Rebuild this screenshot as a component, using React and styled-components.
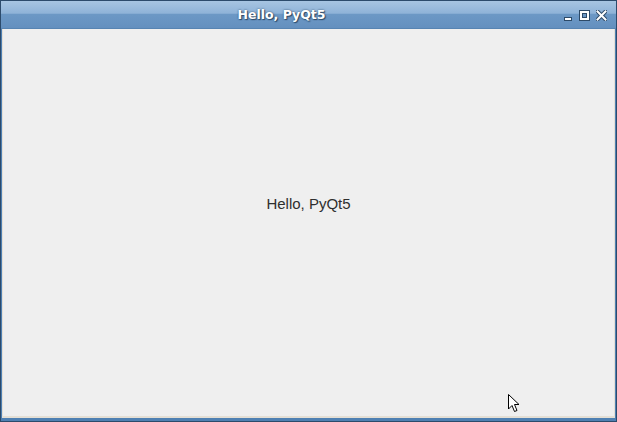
import React from 'react'
import styled, { createGlobalStyle } from 'styled-components'

const GlobalStyle = createGlobalStyle`
    html, body {
        margin: 0;
        padding: 0;
        background: #efefef;
    }
    #root {
        width: 617px;
        height: 422px;
    }
`

const Window = styled.div`
    position: relative;
    box-sizing: border-box;
    width: 617px;
    height: 422px;
    display: flex;
    flex-direction: column;
    background: #4f80b2;
    border: 1px solid #2c4b6c;
    overflow: hidden;
`

const TitleBar = styled.div`
    position: relative;
    height: 27px;
    flex: none;
    display: flex;
    align-items: center;
    justify-content: center;
    background: linear-gradient(
        to bottom,
        #a7c5e2 0%,
        #8fb3d8 45%,
        #6c98c5 50%,
        #6490bf 100%
    );
    border-bottom: 1px solid #5784b2;
`

const Title = styled.span`
    font-family: "DejaVu Sans", sans-serif;
    font-weight: bold;
    font-size: 12.5px;
    color: #ffffff;
    text-shadow: 0 0 2px #2d4a68, 1px 1px 1px #2d4a68;
    margin-right: 54px;
`

const Controls = styled.div`
    position: absolute;
    right: 9px;
    top: 9px;
    display: flex;
    align-items: center;
    gap: 6px;
`

const ControlIcon = styled.svg`
    width: ${p => p.$w || 11}px;
    height: 11px;
    display: block;
`

const Content = styled.div`
    flex: 1;
    display: flex;
    align-items: center;
    justify-content: center;
    padding-bottom: 38px;
    margin: 0 1px 3px 1px;
    background: #efefef;
    border: 1px solid #e4dfd5;
    border-top: none;
    border-bottom-width: 2px;
`

const Label = styled.span`
    font-family: "Liberation Sans", Arial, sans-serif;
    font-size: 15px;
    color: #2e2e2e;
`

const Cursor = styled.svg`
    position: absolute;
    left: 506px;
    top: 392px;
    width: 14px;
    height: 21px;
`

export default function App() {
    return (
        <>
            <GlobalStyle />
            <Window>
                <TitleBar>
                    <Title>Hello, PyQt5</Title>
                    <Controls>
                        <ControlIcon $w={9} viewBox="0 0 9 11">
                            <rect x="0.5" y="7.5" width="7" height="3" fill="#fff" stroke="#2d4a68" strokeWidth="1" />
                        </ControlIcon>
                        <ControlIcon viewBox="0 0 11 11">
                            <rect x="0.5" y="0.5" width="10" height="10" fill="none" stroke="#2d4a68" strokeWidth="1" />
                            <rect x="2" y="2" width="7" height="7" fill="none" stroke="#fff" strokeWidth="2" />
                            <rect x="3.5" y="3.5" width="4" height="4" fill="none" stroke="#2d4a68" strokeWidth="1" />
                        </ControlIcon>
                        <ControlIcon viewBox="0 0 11 11">
                            <path d="M1.5 1.5 L9.5 9.5 M9.5 1.5 L1.5 9.5" stroke="#2d4a68" strokeWidth="4" strokeLinecap="square" />
                            <path d="M1.5 1.5 L9.5 9.5 M9.5 1.5 L1.5 9.5" stroke="#fff" strokeWidth="2" strokeLinecap="square" />
                        </ControlIcon>
                    </Controls>
                </TitleBar>
                <Content>
                    <Label>Hello, PyQt5</Label>
                </Content>
                <Cursor viewBox="0 0 14 21">
                    <path
                        d="M1.5 1.5 L1.5 16 L5 12.5 L7.5 18.5 L10 17.5 L7.5 11.5 L12 11.5 Z"
                        fill="#fff"
                        stroke="#000"
                        strokeWidth="1"
                        strokeLinejoin="miter"
                    />
                </Cursor>
            </Window>
        </>
    )
}
